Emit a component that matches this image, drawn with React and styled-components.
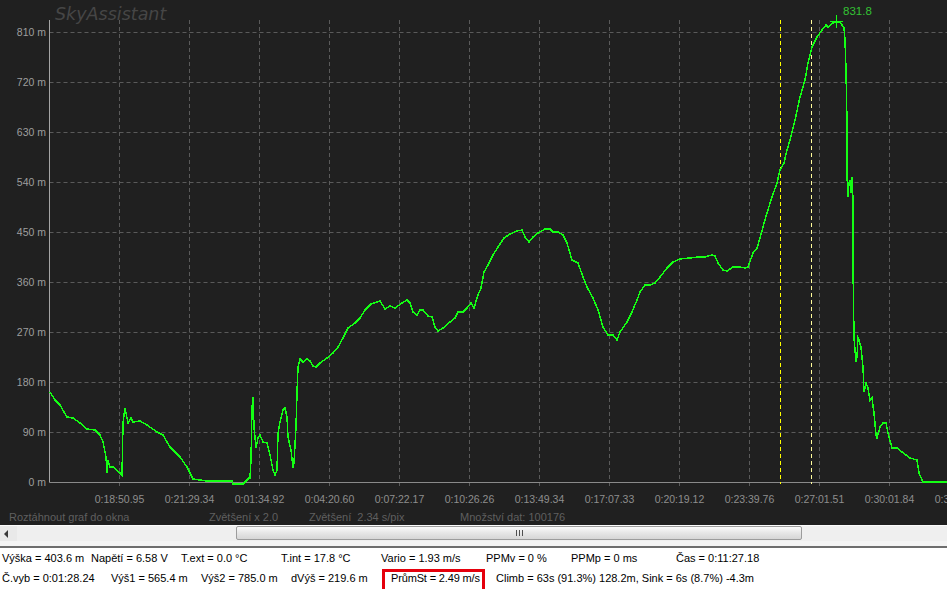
import React from "react";
import styled, { createGlobalStyle } from "styled-components";

const GlobalStyle = createGlobalStyle`
  html, body {
    margin: 0;
    padding: 0;
    background: #fff;
  }
  body {
    font-family: "Liberation Sans", Arial, sans-serif;
  }
`;

const Window = styled.div`
  width: 947px;
  height: 589px;
  overflow: hidden;
  display: flex;
  flex-direction: column;
`;

const GraphPanel = styled.div`
  flex: none;
  height: 525px;
  background: #202020;
  display: flex;
  flex-direction: column;
`;

const Plot = styled.svg`
  display: block;
  flex: none;
  font-family: "Liberation Sans", Arial, sans-serif;
`;

const StatusBar = styled.div`
  flex: none;
  height: 17px;
  display: flex;
  align-items: center;
  padding-left: 9px;
  font-size: 11px;
  color: #5f5f5f;
  white-space: pre;
`;

const StatusItem = styled.span`
  flex: none;
  width: ${p => (p.$w ? p.$w + "px" : "auto")};
`;

const ScrollBar = styled.div`
  flex: none;
  height: 16px;
  display: flex;
  background: #e9e9e9;
  border-top: 1px solid #fcfcfc;
  box-sizing: border-box;
`;

const ArrowButton = styled.div`
  flex: none;
  width: 17px;
  display: flex;
  align-items: center;
  padding-left: 4px;
  box-sizing: border-box;

  &::before {
    content: "";
    border-right: 4px solid #3a3a3a;
    border-top: 4px solid transparent;
    border-bottom: 4px solid transparent;
  }
`;

const Track = styled.div`
  flex: 1;
  display: flex;
  background: #efefef;
`;

const Thumb = styled.div`
  flex: none;
  height: 14px;
  box-sizing: border-box;
  border: 1px solid #9c9c9c;
  border-radius: 2px;
  background: linear-gradient(#fafafa, #e6e6e6 50%, #d6d6d6);
  display: flex;
  align-items: center;
  justify-content: center;
`;

const Grip = styled.div`
  width: 7px;
  height: 6px;
  background: repeating-linear-gradient(90deg, #505050 0 1px, transparent 1px 3px);
`;

const Divider = styled.div`
  flex: none;
  height: 5px;
  background: #f4f4f4;
  border-bottom: 2px solid #6e6e6e;
`;

const InfoPanel = styled.div`
  flex: 1;
  background: #fff;
  padding-left: 2px;
  font-size: 11px;
  color: #000;
`;

const InfoRow = styled.div`
  display: flex;
  align-items: baseline;
  height: 20px;
  line-height: 20px;
  white-space: nowrap;
`;

const Cell = styled.span`
  flex: none;
  width: ${p => (p.$w ? p.$w + "px" : "auto")};
`;

const HighlightCell = styled.span`
  flex: none;
  box-sizing: border-box;
  width: 103px;
  margin-right: 11px;
  border: 3px solid #e5000c;
  line-height: 12px;
  padding: 0 2px 6px 6px;
  letter-spacing: -0.15px;
`;

const pts = [
  [50, 392], [55, 400], [60, 405], [67, 417], [73, 418], [80, 423], [87, 429], [95, 430],
  [100, 435], [103, 442], [106, 457], [107, 473], [108, 460], [110, 467], [113, 467],
  [120, 473], [122, 475], [123, 423], [125, 408], [128, 423], [131, 418], [133, 422],
  [140, 421], [147, 425], [157, 432], [163, 435], [170, 447], [180, 457], [187, 467],
  [193, 479], [207, 481], [232, 481], [233, 484], [243, 484], [249, 478], [250, 478],
  [251, 460], [252, 408], [253, 397], [254, 427], [256, 448], [258, 438], [260, 435],
  [263, 442], [267, 443], [270, 455], [273, 470], [275, 475], [277, 470], [278, 433],
  [280, 422], [283, 410], [285, 408], [287, 417], [288, 437], [291, 450], [293, 468],
  [294, 463], [296, 427], [297, 393], [298, 367], [300, 359], [303, 362], [307, 359],
  [310, 361], [313, 366], [316, 367], [320, 363], [327, 358], [333, 353], [338, 347],
  [343, 338], [348, 328], [355, 323], [360, 318], [365, 310], [371, 304], [377, 302],
  [380, 301], [385, 309], [390, 306], [395, 308], [402, 303], [407, 300], [410, 303],
  [413, 312], [417, 315], [420, 310], [423, 310], [428, 316], [432, 317], [435, 327],
  [438, 331], [443, 328], [450, 322], [455, 318], [458, 312], [463, 312], [467, 308],
  [471, 303], [474, 308], [478, 295], [481, 288], [484, 272], [488, 265], [493, 255],
  [498, 247], [504, 238], [510, 234], [517, 231], [522, 230], [525, 237], [529, 242],
  [533, 237], [538, 233], [545, 229], [550, 229], [553, 232], [558, 232], [563, 235],
  [567, 243], [572, 260], [578, 263], [583, 277], [587, 287], [593, 298], [598, 310],
  [603, 327], [608, 335], [613, 335], [617, 340], [620, 332], [627, 322], [632, 312],
  [637, 300], [640, 292], [645, 285], [650, 285], [655, 283], [660, 277], [667, 268],
  [673, 262], [680, 259], [690, 258], [698, 257], [705, 257], [712, 255], [715, 256],
  [718, 263], [723, 270], [727, 271], [733, 267], [740, 267], [745, 268], [748, 267],
  [753, 253], [757, 248], [760, 238], [763, 227], [767, 213], [772, 197], [777, 183],
  [780, 170], [784, 163], [787, 150], [790, 140], [795, 120], [800, 97], [805, 80],
  [808, 63], [812, 47], [817, 37], [822, 30], [826, 25], [828, 27], [833, 23], [837, 22],
  [840, 22], [844, 28], [845, 40], [846, 70], [847, 123], [847, 175], [848, 197],
  [849, 183], [850, 180], [851, 193], [852, 177], [853, 200], [853, 265], [854, 338],
  [856, 362], [857, 357], [858, 338], [859, 340], [861, 347], [863, 367], [864, 392],
  [866, 383], [868, 388], [870, 400], [872, 398], [874, 413], [876, 435], [877, 438],
  [880, 427], [883, 423], [886, 423], [888, 433], [892, 448], [897, 448], [902, 452],
  [906, 455], [910, 458], [917, 460], [919, 473], [923, 482], [947, 482]
];

const yLabels = ["0 m", "90 m", "180 m", "270 m", "360 m", "450 m", "540 m", "630 m", "720 m", "810 m"];
const xLabels = [
  "0:18:50.95", "0:21:29.34", "0:01:34.92", "0:04:20.60", "0:07:22.17", "0:10:26.26",
  "0:13:49.34", "0:17:07.33", "0:20:19.12", "0:23:39.76", "0:27:01.51", "0:30:01.84", "0:33:02.17"
];

const AXIS_Y = 482.5;
const AXIS_X = 49.5;

function Chart() {
  return (
    <Plot width="947" height="508" viewBox="0 0 947 508">
      <text x="55" y="20" fontFamily="DejaVu Sans, sans-serif" fontStyle="italic" fontSize="17.5" fill="#464646">
        SkyAssistant
      </text>
      {yLabels.map((l, i) => {
        const y = AXIS_Y - i * 50;
        return (
          <g key={l}>
            {i > 0 && (
              <line x1={AXIS_X} x2="947" y1={y} y2={y} stroke="#5a5a5a" strokeDasharray="4 3" />
            )}
            <text x="46" y={y + 3.8} textAnchor="end" fontSize="10.5" fill="#9e9e9e">{l}</text>
          </g>
        );
      })}
      {xLabels.map((l, i) => {
        const x = 119.5 + i * 70;
        return (
          <g key={l}>
            <line x1={x} x2={x} y1="20" y2="486" stroke="#5a5a5a" strokeDasharray="4 3" />
            <text x={x} y="503" textAnchor="middle" fontSize="10.5" fill="#8e8e8e">{l}</text>
          </g>
        );
      })}
      <line x1={AXIS_X} x2={AXIS_X} y1="20" y2={AXIS_Y} stroke="#a4a4a4" />
      <line x1={AXIS_X} x2="947" y1={AXIS_Y} y2={AXIS_Y} stroke="#8a8a8a" />
      <line x1="780.5" x2="780.5" y1="20" y2="484" stroke="#ffff00" strokeDasharray="4 3" />
      <line x1="811.5" x2="811.5" y1="20" y2="484" stroke="#fffb9a" strokeDasharray="4 3" />
      <polyline
        points={pts.map(p => p.join(",")).join(" ")}
        fill="none"
        stroke="#14ff14"
        strokeWidth="1.5"
        strokeLinejoin="miter"
        shapeRendering="crispEdges"
      />
      <line x1="830" x2="843" y1="21.5" y2="21.5" stroke="#14ff14" />
      <line x1="836.5" x2="836.5" y1="15" y2="28" stroke="#14ff14" />
      <text x="843" y="15" fontSize="11.5" fill="#34c234">831.8</text>
    </Plot>
  );
}

export default function App() {
  const thumbStart = 236;
  const thumbEnd = 802;
  return (
    <>
      <GlobalStyle />
      <Window>
        <GraphPanel>
          <Chart />
          <StatusBar>
            <StatusItem $w={200}>Roztáhnout graf do okna</StatusItem>
            <StatusItem $w={100}>Zvětšení x 2.0</StatusItem>
            <StatusItem $w={151}>Zvětšení  2.34 s/pix</StatusItem>
            <StatusItem>Množství dat: 100176</StatusItem>
          </StatusBar>
        </GraphPanel>
        <ScrollBar>
          <ArrowButton />
          <Track>
            <Thumb style={{ marginLeft: thumbStart - 17, width: thumbEnd - thumbStart }}>
              <Grip />
            </Thumb>
          </Track>
        </ScrollBar>
        <Divider />
        <InfoPanel>
          <InfoRow>
            <Cell $w={89}>Výška = 403.6 m</Cell>
            <Cell $w={90}>Napětí = 6.58 V</Cell>
            <Cell $w={100}>T.ext = 0.0 °C</Cell>
            <Cell $w={100}>T.int = 17.8 °C</Cell>
            <Cell $w={105}>Vario = 1.93 m/s</Cell>
            <Cell $w={85}>PPMv = 0 %</Cell>
            <Cell $w={105}>PPMp = 0 ms</Cell>
            <Cell>Čas = 0:11:27.18</Cell>
          </InfoRow>
          <InfoRow>
            <Cell $w={109}>Č.vyb = 0:01:28.24</Cell>
            <Cell $w={90}>Výš1 = 565.4 m</Cell>
            <Cell $w={90}>Výš2 = 785.0 m</Cell>
            <Cell $w={91}>dVýš = 219.6 m</Cell>
            <HighlightCell>PrůmSt = 2.49 m/s</HighlightCell>
            <Cell>Climb = 63s (91.3%) 128.2m, Sink = 6s (8.7%) -4.3m</Cell>
          </InfoRow>
        </InfoPanel>
      </Window>
    </>
  );
}
